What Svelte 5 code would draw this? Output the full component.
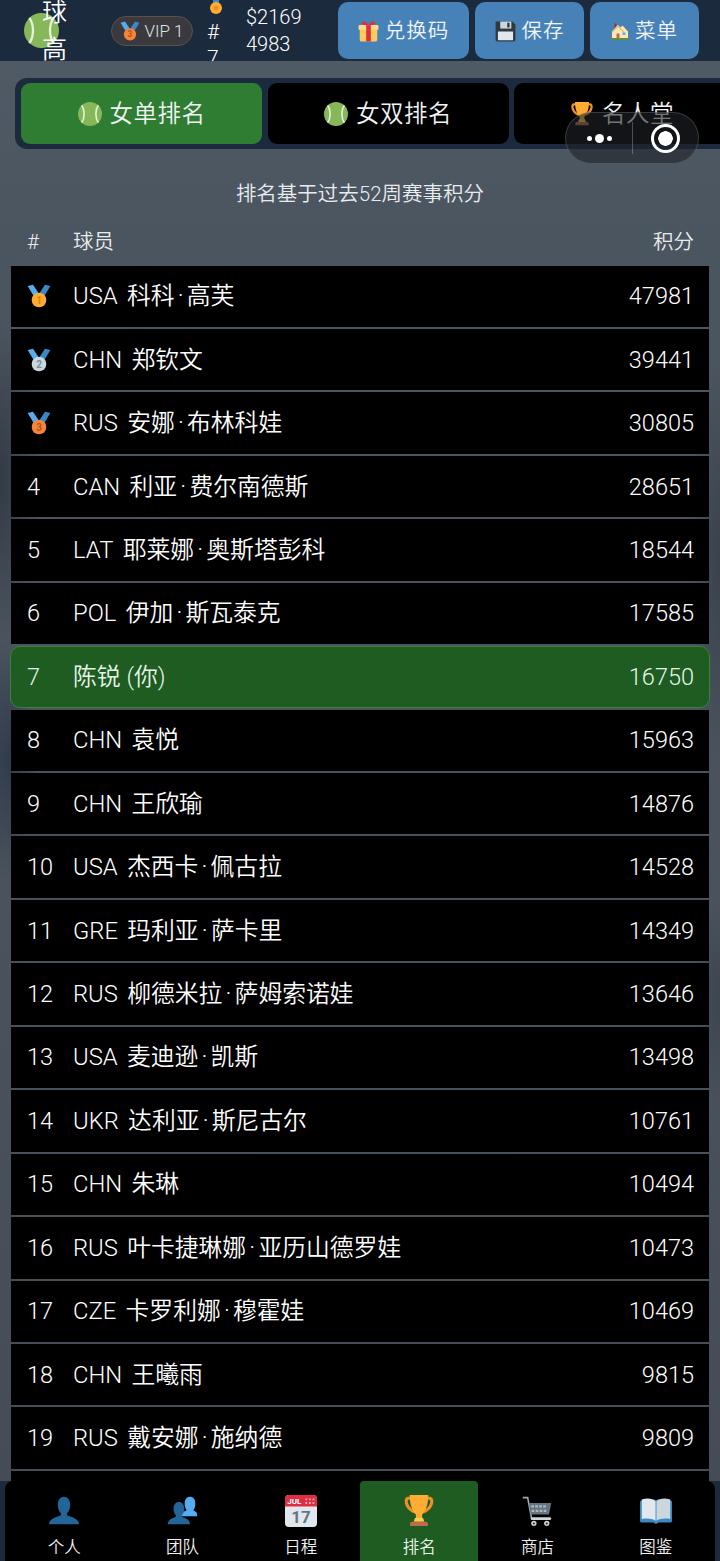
<script lang="ts">
  type Player = { rank: number; code?: string; name: string; score: number; me?: boolean };

  const players: Player[] = [
    { rank: 1, code: "USA", name: "科科·高芙", score: 47981 },
    { rank: 2, code: "CHN", name: "郑钦文", score: 39441 },
    { rank: 3, code: "RUS", name: "安娜·布林科娃", score: 30805 },
    { rank: 4, code: "CAN", name: "利亚·费尔南德斯", score: 28651 },
    { rank: 5, code: "LAT", name: "耶莱娜·奥斯塔彭科", score: 18544 },
    { rank: 6, code: "POL", name: "伊加·斯瓦泰克", score: 17585 },
    { rank: 7, name: "陈锐 (你)", score: 16750, me: true },
    { rank: 8, code: "CHN", name: "袁悦", score: 15963 },
    { rank: 9, code: "CHN", name: "王欣瑜", score: 14876 },
    { rank: 10, code: "USA", name: "杰西卡·佩古拉", score: 14528 },
    { rank: 11, code: "GRE", name: "玛利亚·萨卡里", score: 14349 },
    { rank: 12, code: "RUS", name: "柳德米拉·萨姆索诺娃", score: 13646 },
    { rank: 13, code: "USA", name: "麦迪逊·凯斯", score: 13498 },
    { rank: 14, code: "UKR", name: "达利亚·斯尼古尔", score: 10761 },
    { rank: 15, code: "CHN", name: "朱琳", score: 10494 },
    { rank: 16, code: "RUS", name: "叶卡捷琳娜·亚历山德罗娃", score: 10473 },
    { rank: 17, code: "CZE", name: "卡罗利娜·穆霍娃", score: 10469 },
    { rank: 18, code: "CHN", name: "王曦雨", score: 9815 },
    { rank: 19, code: "RUS", name: "戴安娜·施纳德", score: 9809 }
  ];

  const medalColors: Record<number, string[]> = {
    1: ["#ffac33", "#d97f12"],
    2: ["#ccd6dd", "#7f8f9c"],
    3: ["#f4853a", "#b9531a"]
  };

  const tabs = [
    { id: "single", label: "女单排名", icon: "ball" },
    { id: "double", label: "女双排名", icon: "ball" },
    { id: "fame", label: "名人堂", icon: "trophy" }
  ];
  let activeTab = $state("single");

  const navItems = [
    { label: "个人", icon: "person" },
    { label: "团队", icon: "team" },
    { label: "日程", icon: "calendar" },
    { label: "排名", icon: "trophy", active: true },
    { label: "商店", icon: "cart" },
    { label: "图鉴", icon: "book" }
  ];
</script>

{#snippet ball(size: number)}
  <svg width={size} height={size} viewBox="0 0 36 36" class="ico">
    <circle cx="18" cy="18" r="18" fill="#86b85a" />
    <path d="M5.500 5C10.500 12 10.500 24 5.500 31" fill="none" stroke="#e6f0d8" stroke-width="2.400" />
    <path d="M30.500 5C25.500 12 25.500 24 30.500 31" fill="none" stroke="#e6f0d8" stroke-width="2.400" />
  </svg>
{/snippet}

{#snippet medal(rank: number, size: number)}
  <svg width={size} height={size} viewBox="0 0 36 36" class="ico">
    <path d="M9 1L1 3l9 15 7-5z" fill="#55acee" />
    <path d="M27 1l8 2-9 15-7-5z" fill="#3b88c3" />
    <path d="M11 15h14l-3 6h-8z" fill="#3b88c3" />
    <circle cx="18" cy="24" r="11" fill={medalColors[rank][0]} />
    <text x="18" y="29.500" text-anchor="middle" font-size="15" font-weight="700" font-family="Roboto, sans-serif" fill={medalColors[rank][1]}>{rank}</text>
  </svg>
{/snippet}

{#snippet trophy(size: number)}
  <svg width={size} height={size} viewBox="0 0 36 36" class="ico">
    <path d="M6 2h5v3H7.500c-2 0-2.500 1.500-2 3.500.6 3 3 7 7.500 9l-1 3C6 18 2.500 13 2 8.500 1.600 4.500 3 2 6 2zM30 2h-5v3h3.500c2 0 2.500 1.500 2 3.500-.6 3-3 7-7.500 9l1 3c6-2.500 9.500-7.500 10-12 .4-4-1-6.500-4-6.500z" fill="#f19020" />
    <path d="M7.500 0h21c0 12-4 20-7 22v6h-7v-6C11.500 20 7.500 12 7.500 0z" fill="#ffac33" />
    <path d="M13.500 26h9l1.500 4H12z" fill="#ffcc4d" />
    <path d="M10 30h16c1 0 2 1 2 2.500V35H8v-2.500C8 31 9 30 10 30z" fill="#c1694f" />
  </svg>
{/snippet}

{#snippet navIcon(name: string)}
  {#if name === "person"}
    <svg width="32" height="32" viewBox="0 0 36 36" class="ico">
      <path d="M1 33c0-5 6-8 12-9.500 1.500-.4 2-1.500 1.500-3C12 18 11 15 11 11 11 5.500 14 2 18 2s7 3.500 7 9c0 4-1 7-3.500 9.500-.5 1.500 0 2.600 1.500 3C29 25 35 28 35 33z" fill="#269" />
    </svg>
  {:else if name === "team"}
    <svg width="32" height="32" viewBox="0 0 36 36" class="ico">
      <path d="M15 24c0-3 4-5 7-6 1-.3 1.200-1 .8-2C21.500 14.500 21 12 21 9.500 21 5 23.500 2 27 2s6 3 6 7.500c0 2.500-.5 5-1.800 6.500-.4 1-.2 1.700.8 2 1.500.5 3 1.500 3 4.500V24z" fill="#55acee" />
      <path d="M2 33c0-4.500 3.500-6.500 8-8 1-.3 1.300-1.200 1-2.200C9 20.500 8.500 18 8.500 15.500 8.500 11 11 8 14.500 8S20.500 11 20.500 15.500c0 2.500-.5 5-2.500 7.300-.3 1 0 1.900 1 2.200 4.500 1.500 8 3.500 8 8z" fill="#269" />
    </svg>
  {:else if name === "calendar"}
    <svg width="32" height="32" viewBox="0 0 36 36" class="ico">
      <path d="M32 36H4c-2.200 0-4-1.800-4-4V4c0-2.200 1.800-4 4-4h28c2.200 0 4 1.800 4 4v28c0 2.200-1.800 4-4 4z" fill="#e1e8ed" />
      <path d="M32 0H4C1.800 0 0 1.800 0 4v9h36V4c0-2.200-1.800-4-4-4z" fill="#dd2e44" />
      <text x="2.500" y="10" font-size="9" font-weight="700" font-family="Roboto, sans-serif" fill="#fff">JUL</text>
      <path d="M23 4h2v2h-2zM27 4h2v2h-2zM31 4h2v2h-2zM23 8h2v2h-2zM27 8h2v2h-2zM31 8h2v2h-2z" fill="#f4abba" />
      <text x="18" y="32" text-anchor="middle" font-size="19" font-weight="700" font-family="Roboto, sans-serif" fill="#66757f">17</text>
    </svg>
  {:else if name === "trophy"}
    {@render trophy(32)}
  {:else if name === "cart"}
    <svg width="32" height="32" viewBox="0 0 36 36" class="ico">
      <path d="M2 3h5.500L12 27h20" fill="none" stroke="#99aab5" stroke-width="1.800" />
      <path d="M9 9h25l-2.500 13H11z" fill="#66757f" />
      <path d="M11.500 11.500h3V14h-3zM16 11.500h3V14h-3zM20.500 11.500h3V14h-3zM25 11.500h3V14h-3zM12 16.500h3V19h-3zM16.500 16.500h3V19h-3zM21 16.500h3V19h-3zM25.500 16.500h3V19h-3z" fill="#a9b8c2" />
      <rect x="11" y="25" width="23" height="3" rx="1.500" fill="#ccd6dd" />
      <circle cx="14.500" cy="32" r="3" fill="#ccd6dd" /><circle cx="14.500" cy="32" r="1.200" fill="#292f33" />
      <circle cx="29" cy="32" r="3" fill="#ccd6dd" /><circle cx="29" cy="32" r="1.200" fill="#292f33" />
    </svg>
  {:else if name === "book"}
    <svg width="32" height="32" viewBox="0 0 36 36" class="ico">
      <path d="M0 8c0-1 1-2 2-2l14-1 2 1 2-1 14 1c1 0 2 1 2 2v21c0 1.500-1 2-2 2H21c-1 0-1.500 1.500-3 1.500S16 31 15 31H2c-1 0-2-.5-2-2z" fill="#3b88c3" />
      <path d="M2 5c6-2 12-1.500 15.500 2v22C14 26.500 8 26 2 27z" fill="#e1e8ed" />
      <path d="M34 5c-6-2-12-1.500-15.500 2v22C22 26.500 28 26 34 27z" fill="#ccd6dd" />
    </svg>
  {/if}
{/snippet}

<div class="page">
  <header class="topbar">
    <div class="logo">
      <span class="logo-ball">{@render ball(35)}</span>
      <span class="logo-text">球高</span>
    </div>
    <div class="vip">{@render medal(3, 20)}<span>VIP 1</span></div>
    <div class="rank-col">
      <svg width="14" height="15" viewBox="0 0 14 15" class="ico">
        <path d="M4 0h6v5H4z" fill="#3b88c3" />
        <circle cx="7" cy="8" r="6" fill="#ffac33" />
        <circle cx="7" cy="8" r="2.500" fill="#f19020" />
      </svg>
      <span class="rank-text">#7</span>
    </div>
    <div class="money">$21694983</div>
    <div class="actions">
      <button class="act wide">
        <svg width="21" height="21" viewBox="0 0 36 36" class="ico">
          <path d="M3 12h30v20c0 2-1 3-3 3H6c-2 0-3-1-3-3z" fill="#fdcb58" />
          <path d="M1 9c0-1 1-2 2-2h30c1 0 2 1 2 2v6H1z" fill="#ffd983" />
          <path d="M14 7h8v28h-8z" fill="#dd2e44" />
          <path d="M18 7C14 1 9 0 7 2s0 5 11 5zM18 7c4-6 9-7 11-5s0 5-11 5z" fill="#dd2e44" />
        </svg>
        兑换码
      </button>
      <button class="act">
        <svg width="21" height="21" viewBox="0 0 36 36" class="ico">
          <path d="M3 1h27l5 5v26c0 1.700-1.300 3-3 3H4c-1.700 0-3-1.300-3-3V3c0-1.100.9-2 2-2z" fill="#31373d" />
          <rect x="9" y="1" width="19" height="12" fill="#ccd6dd" />
          <rect x="21" y="3" width="4" height="8" fill="#31373d" />
          <rect x="5" y="18" width="26" height="15" fill="#e1e8ed" />
        </svg>
        保存
      </button>
      <button class="act">
        <svg width="18" height="18" viewBox="0 0 36 36" class="ico">
          <rect x="7" y="3" width="4" height="10" fill="#9b2c3f" />
          <path d="M2 33V19L14 6l5 5 4-4 11 12v14z" fill="#ffe8b6" />
          <path d="M14 6L1 20l2 2L14 10l11 12 2-2z" fill="#e7c27a" />
          <rect x="11" y="23" width="6" height="10" fill="#c1694f" />
          <rect x="23" y="21" width="6" height="5" fill="#5dadec" />
          <rect x="0" y="32" width="36" height="4" fill="#5c913b" />
        </svg>
        菜单
      </button>
    </div>
  </header>

  <main class="content">
    <div class="tabs">
      {#each tabs as t (t.id)}
        <button class="tab" class:active={activeTab === t.id} onclick={() => (activeTab = t.id)}>
          {#if t.icon === "ball"}{@render ball(24)}{:else}{@render trophy(24)}{/if}
          {t.label}
        </button>
      {/each}
    </div>

    <p class="note">排名基于过去52周赛事积分</p>

    <div class="table-head">
      <span class="c-rank">#</span>
      <span class="c-name">球员</span>
      <span class="c-score">积分</span>
    </div>

    <div class="rows">
      {#each players as p (p.rank)}
        <div class="row" class:me={p.me}>
          <span class="c-rank">
            {#if p.rank <= 3}{@render medal(p.rank, 24)}{:else}{p.rank}{/if}
          </span>
          <span class="c-name">
            {#if p.code}<span class="code">{p.code}</span>{/if}
            {#each p.name.split("·") as part, i}{#if i > 0}<span class="dot">·</span>{/if}{part}{/each}
          </span>
          <span class="c-score">{p.score}</span>
        </div>
      {/each}
      <div class="row"></div>
    </div>
  </main>

  <nav class="bottom">
    <div class="bottom-inner">
      {#each navItems as item (item.label)}
        <div class="nav-item" class:active={item.active}>
          {@render navIcon(item.icon)}
          <span>{item.label}</span>
        </div>
      {/each}
    </div>
  </nav>

  <div class="capsule">
    <div class="dots"><i></i><i class="big"></i><i></i></div>
    <div class="divider"></div>
    <div class="target"><i></i></div>
  </div>
</div>

<style>
  :global(body) {
    margin: 0;
    background: #1b2a3d;
  }

  .page {
    position: relative;
    width: 720px;
    height: 1561px;
    overflow: hidden;
    font-family: Roboto, "Noto Sans CJK SC", sans-serif;
    font-weight: 350;
    color: #fff;
    background:
      radial-gradient(ellipse 40px 160px at 0 480px, rgba(24, 32, 44, 0.5), transparent),
      radial-gradient(ellipse 30px 120px at 8px 760px, rgba(28, 44, 64, 0.6), transparent),
      radial-gradient(ellipse 30px 200px at 720px 560px, rgba(30, 38, 50, 0.4), transparent),
      radial-gradient(ellipse 30px 100px at 720px 1000px, rgba(30, 38, 50, 0.3), transparent),
      linear-gradient(180deg, #505a65 60px, #4b5560 240px, #4a525c 900px, #454c56 1500px);
  }

  .ico {
    display: block;
    flex-shrink: 0;
  }

  .topbar {
    height: 61px;
    display: flex;
    align-items: center;
    background: #1b2a3d;
    overflow: hidden;
  }

  .logo {
    display: flex;
    align-items: center;
    margin-left: 24px;
    width: 87px;
  }

  .logo-text {
    width: 25px;
    margin-left: -17px;
    font-size: 25px;
    line-height: 37px;
    position: relative;
  }

  .vip {
    width: 82px;
    height: 30px;
    box-sizing: border-box;
    display: flex;
    align-items: center;
    justify-content: center;
    gap: 4px;
    border: 1px solid #5c5149;
    border-radius: 15px;
    background: #3a3a3e;
    font-size: 17px;
    color: #dfe1e3;
  }

  .rank-col {
    width: 15px;
    margin-left: 14px;
    align-self: flex-start;
    font-size: 21px;
    line-height: 26px;
    word-break: break-all;
  }

  .rank-col .ico {
    margin-left: 2px;
  }

  .rank-text {
    display: block;
    margin-top: 4px;
  }

  .money {
    width: 60px;
    margin-left: 24px;
    font-size: 20px;
    line-height: 27px;
    word-break: break-all;
  }

  .actions {
    display: flex;
    gap: 6px;
    margin-left: 32px;
  }

  .act {
    width: 109px;
    height: 57px;
    display: flex;
    align-items: center;
    justify-content: center;
    gap: 6px;
    padding: 1px 0 0;
    border: none;
    border-radius: 10px;
    background: #4682b8;
    color: #f2f4f5;
    font: inherit;
    font-size: 20.500px;
    line-height: 26px;
    letter-spacing: 1px;
  }

  .act.wide {
    width: 131px;
  }

  .content {
    padding-top: 17px;
  }

  .tabs {
    display: flex;
    gap: 5.500px;
    margin-left: 15px;
    padding: 5px 5px 5px 6px;
    width: max-content;
    border-radius: 12px;
    background: #1b2a3d;
  }

  .tab {
    width: 241px;
    height: 60.500px;
    display: flex;
    align-items: center;
    justify-content: center;
    gap: 8px;
    padding: 1px 0 0;
    border: none;
    border-radius: 9px;
    background: #000;
    color: #f2f4f5;
    font: inherit;
    font-size: 23.500px;
    line-height: 30px;
    letter-spacing: 0.5px;
  }

  .tab:last-child {
    width: 216px;
  }

  .tab.active {
    background: #2e7d32;
  }

  .note {
    margin: 31px 0 0;
    text-align: center;
    font-size: 20.500px;
    line-height: 28px;
    color: #e9ecef;
  }

  .table-head {
    display: flex;
    align-items: center;
    height: 36px;
    margin-top: 16px;
    padding: 0 26px 0 27px;
    font-size: 20.500px;
    line-height: 26px;
    color: #e9ecef;
  }

  .c-rank {
    width: 46px;
    flex-shrink: 0;
  }

  .c-name {
    flex: 1;
  }

  .row .c-name {
    font-size: 23.800px;
  }

  .code {
    margin-right: 3.500px;
  }

  .dot {
    margin: 0 3.200px;
  }

  .rows {
    display: flex;
    flex-direction: column;
    gap: 2px;
    margin: 6px 11px 0;
  }

  .row {
    height: 61.450px;
    flex-shrink: 0;
    display: flex;
    align-items: center;
    padding: 0 15px 0 16px;
    background: #000;
    font-size: 23.500px;
    line-height: 30px;
  }

  .row .c-rank {
    display: flex;
    align-items: center;
  }

  .row.me {
    margin: 0 -1px;
    padding: 0 15px 0 16px;
    box-sizing: border-box;
    border: 1px solid #3f7f42;
    border-radius: 10px;
    background: #1e5c22;
    color: #e8f5e9;
  }

  .bottom {
    position: absolute;
    left: 0;
    right: 0;
    bottom: 0;
    height: 80px;
    padding: 0 5px;
    box-sizing: border-box;
    background: #1b2a3d;
  }

  .bottom-inner {
    height: 100%;
    display: grid;
    grid-template-columns: repeat(6, 1fr);
    border-radius: 8px 8px 0 0;
    background: #000;
  }

  .nav-item {
    display: flex;
    flex-direction: column;
    align-items: center;
    gap: 11px;
    padding-top: 14px;
    font-size: 16.500px;
    line-height: 20px;
    color: #f0f2f4;
  }

  .nav-item.active {
    background: #1e5c22;
    border-radius: 4px 4px 0 0;
    color: #e8f5e9;
  }

  .capsule {
    position: absolute;
    left: 565px;
    top: 112px;
    width: 134px;
    height: 52px;
    box-sizing: border-box;
    display: flex;
    align-items: center;
    border: 1px solid rgba(255, 255, 255, 0.16);
    border-radius: 26px;
    background: rgba(30, 33, 38, 0.6);
  }

  .dots {
    width: 66px;
    display: flex;
    align-items: center;
    justify-content: center;
    gap: 3px;
  }

  .dots i {
    width: 5px;
    height: 5px;
    border-radius: 50%;
    background: #fff;
  }

  .dots i.big {
    width: 9px;
    height: 9px;
  }

  .divider {
    width: 1px;
    height: 32px;
    background: rgba(255, 255, 255, 0.25);
  }

  .target {
    flex: 1;
    display: flex;
    justify-content: center;
  }

  .target i {
    width: 29px;
    height: 29px;
    box-sizing: border-box;
    border: 3px solid #fff;
    border-radius: 50%;
    background: radial-gradient(circle, #fff 0 7px, transparent 7.500px);
  }
</style>
